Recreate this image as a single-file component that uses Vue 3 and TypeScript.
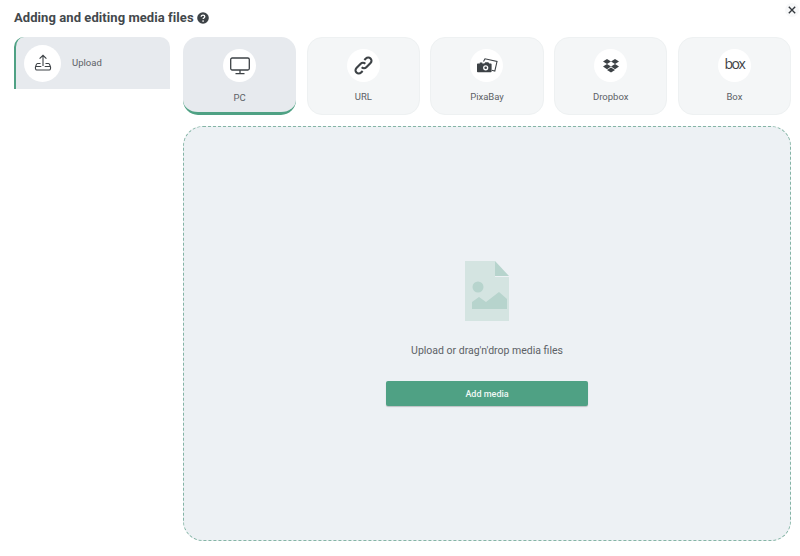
<template>
  <div class="dialog">
    <button class="close" aria-label="Close">
      <svg viewBox="0 0 10 10" width="8" height="8"><path d="M1 1l8 8M9 1l-8 8" stroke="#33383d" stroke-width="1.7" fill="none" /></svg>
    </button>
    <header class="title">
      <h1>Adding and editing media files</h1>
      <svg class="help" viewBox="0 0 12 12" width="12" height="12">
        <circle cx="6" cy="6" r="5.8" fill="#3d4246" />
        <path d="M4.2 4.7c0-1 .8-1.6 1.8-1.6s1.8.6 1.8 1.5c0 1.300-1.700 1.300-1.700 2.500" stroke="#fff" stroke-width="1.300" fill="none" />
        <circle cx="6.100" cy="9" r=".85" fill="#fff" />
      </svg>
    </header>

    <div class="body">
      <aside class="side">
        <div class="side-item">
          <span class="circle big">
            <svg viewBox="0 0 18 18" width="18" height="18" fill="none" stroke="#3d4246" stroke-width="1.100">
              <path d="M9 12V1.500M5.600 4.700L9 1.300l3.400 3.400" />
              <path d="M6.500 9.500H3.500c-.8 0-1 .6-1.200 1.200L1.500 13c-.3.900 0 3 1.200 3h12.600c1.200 0 1.500-2.100 1.200-3l-.8-2.300c-.2-.6-.4-1.200-1.200-1.200h-3M1.800 12.500h5.500M10.700 12.500h5.500" />
            </svg>
          </span>
          <span class="side-label">Upload</span>
        </div>
      </aside>

      <main class="main">
        <div class="tabs">
          <div v-for="tab in tabs" :key="tab" class="tab" :class="{ active: tab === 'PC' }">
            <span class="circle">
              <svg v-if="tab === 'PC'" viewBox="0 0 20 18" width="20" height="18" fill="none" stroke="#3d4246" stroke-width="1.300">
                <rect x=".7" y="1" width="18.600" height="12" rx="1.500" />
                <path d="M10 13v3.500M5.500 16.700h9" />
              </svg>
              <svg v-else-if="tab === 'URL'" viewBox="0 0 20 20" width="21" height="21" fill="none" stroke="#3d4246" stroke-width="2">
                <path d="M8.300 11.700a3.100 3.100 0 0 0 4.400 0l4-4a3.100 3.100 0 0 0-4.400-4.400l-1.500 1.500" />
                <path d="M11.700 8.300a3.100 3.100 0 0 0-4.400 0l-4 4a3.100 3.100 0 0 0 4.400 4.400l1.500-1.500" />
              </svg>
              <svg v-else-if="tab === 'PixaBay'" viewBox="0 0 22 16" width="22" height="16">
                <path d="M7.500 3.500L9 .8l12 2.700-2.200 9.500-3-.7" fill="none" stroke="#3d4246" stroke-width="1.100" />
                <path d="M1.800 5.500h2V4.500h2.500v1h2l1-1.200h3l1 1.200h1.500c.5 0 .8.300.8.800v7.200c0 .5-.3.800-.8.800H1.800c-.5 0-.8-.3-.8-.8V6.300c0-.5.300-.8.800-.8z" fill="#3d4246" />
                <circle cx="9.700" cy="9.800" r="2.600" fill="#fff" />
                <circle cx="9.700" cy="9.800" r="1.300" fill="#3d4246" />
              </svg>
              <svg v-else-if="tab === 'Dropbox'" viewBox="0 0 20 18" width="16" height="15" fill="#3d4246">
                <path d="M5 .8L0 4l5 3.200L10 4zM15 .8L10 4l5 3.200L20 4zM0 10.400l5 3.200 5-3.200-5-3.200zM15 7.200l-5 3.200 5 3.200 5-3.200zM5 14.700l5 3.200 5-3.200-5-3.200z" />
              </svg>
              <span v-else class="box-logo">box</span>
            </span>
            <span class="tab-label">{{ tab }}</span>
          </div>
        </div>

        <section class="drop">
          <svg class="file" viewBox="0 0 44 60" width="44" height="60">
            <path d="M0 0h30v16h14v44H0z" fill="#d4e4e1" />
            <path d="M30 0l14 15H30z" fill="#b7d4cd" />
            <circle cx="13" cy="26" r="5.500" fill="#b7d4cd" />
            <path d="M7 48v-7l7-5 7 5 13-10 8 7v10z" fill="#b7d4cd" />
          </svg>
          <p class="hint">Upload or drag'n'drop media files</p>
          <button class="add">Add media</button>
        </section>
      </main>
    </div>
  </div>
</template>

<script setup lang="ts">
const tabs: string[] = ['PC', 'URL', 'PixaBay', 'Dropbox', 'Box']
</script>

<style>
html,
body {
  margin: 0;
  background: #fff;
}
</style>

<style scoped>
.dialog {
  position: relative;
  box-sizing: border-box;
  width: 800px;
  height: 556px;
  padding: 9px 9px 15px 14px;
  font-family: Roboto, "Liberation Sans", sans-serif;
  color: #3d4246;
  background: #fff;
  overflow: hidden;
}
.close {
  position: absolute;
  top: 3px;
  right: 1px;
  width: 14px;
  height: 14px;
  padding: 0;
  border: 0;
  background: #f7f8f9;
  border-radius: 50%;
  display: flex;
  align-items: center;
  justify-content: center;
}
.title {
  display: flex;
  align-items: center;
  gap: 3px;
  height: 17px;
  margin-bottom: 11px;
}
.title h1 {
  margin: 0;
  font-size: 13px;
  font-weight: 700;
  letter-spacing: 0.07px;
  color: #43484c;
}
.body {
  display: flex;
  gap: 13px;
  height: 504px;
}
.side {
  width: 156px;
  flex: none;
}
.side-item {
  box-sizing: border-box;
  height: 52px;
  display: flex;
  align-items: center;
  gap: 10px;
  padding-left: 8px;
  background: #e7eaee;
  border-left: 2px solid #4fa184;
  border-radius: 10px 10px 0 0;
}
.circle {
  width: 33px;
  height: 33px;
  border-radius: 50%;
  background: #fff;
  display: flex;
  align-items: center;
  justify-content: center;
  flex: none;
}
.circle.big {
  width: 37px;
  height: 37px;
}
.side-label {
  font-size: 9.500px;
  margin-left: 1px;
  margin-top: -1px;
  color: #5c6166;
}
.main {
  flex: 1;
  display: flex;
  flex-direction: column;
  gap: 11px;
  min-width: 0;
}
.tabs {
  display: grid;
  grid-template-columns: repeat(5, 1fr);
  gap: 10.500px;
  height: 78px;
}
.tab {
  box-sizing: border-box;
  display: flex;
  flex-direction: column;
  align-items: center;
  padding-top: 11px;
  gap: 9px;
  background: #f4f6f7;
  border: 1px solid #eef1f2;
  border-radius: 15px;
}
.tab.active {
  background: #e7eaee;
  border: 0;
  padding-top: 12px;
  gap: 10px;
  border-bottom: 3px solid #4fa184;
}
.tab-label {
  font-size: 9.500px;
  color: #5c6166;
}
.box-logo {
  font-family: "Open Sans", sans-serif;
  font-size: 14px;
  letter-spacing: -1.500px;
  line-height: 1;
  color: #3d4246;
  margin-top: -4px;
}
.drop {
  flex: none;
  box-sizing: border-box;
  height: 415px;
  display: flex;
  flex-direction: column;
  align-items: center;
  padding-top: 134px;
  background: #edf1f4;
  border: 1px dashed #85b5a6;
  border-radius: 20px;
}
.hint {
  margin: 23px 0 0;
  font-size: 10.500px;
  line-height: 13px;
  color: #5c6166;
}
.add {
  margin-top: 24px;
  width: 202px;
  height: 25px;
  border: 0;
  border-radius: 2px;
  background: #4fa184;
  box-shadow: 0 1px 1px rgba(0, 0, 0, 0.2);
  color: #eef8f4;
  font-family: inherit;
  font-size: 9px;
  font-weight: 500;
}
</style>
